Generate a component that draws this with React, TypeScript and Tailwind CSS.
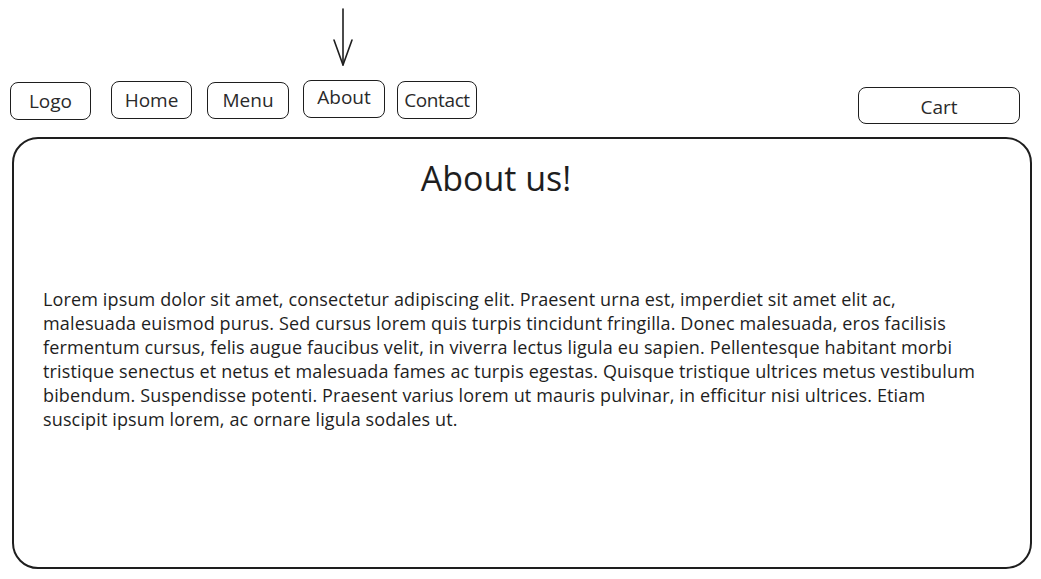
import React from "react";

const lines = [
  "Lorem ipsum dolor sit amet, consectetur adipiscing elit. Praesent urna est, imperdiet sit amet elit ac,",
  "malesuada euismod purus. Sed cursus lorem quis turpis tincidunt fringilla. Donec malesuada, eros facilisis",
  "fermentum cursus, felis augue faucibus velit, in viverra lectus ligula eu sapien. Pellentesque habitant morbi",
  "tristique senectus et netus et malesuada fames ac turpis egestas. Quisque tristique ultrices metus vestibulum",
  "bibendum. Suspendisse potenti. Praesent varius lorem ut mauris pulvinar, in efficitur nisi ultrices. Etiam",
  "suscipit ipsum lorem, ac ornare ligula sodales ut.",
];

function Btn({ label, className }: { label: string; className: string }) {
  return (
    <div
      className={`flex items-center justify-center border-[1.5px] border-[#1e1e1e] rounded-[8px] text-[19px] text-[#2a2a2a] ${className}`}
    >
      {label}
    </div>
  );
}

export default function App() {
  return (
    <div
      className="w-[1041px] h-[579px] bg-white overflow-hidden text-[#1e1e1e]"
      style={{ fontFamily: '"Open Sans", "Noto Sans", Arial, sans-serif' }}
    >
      <div className="h-[80px] pl-[332px] pt-[8px]">
        <svg width="22" height="60" viewBox="0 0 22 60" fill="none" stroke="#1e1e1e" strokeWidth="1.6" strokeLinecap="round" strokeLinejoin="round">
          <path d="M11 1 L11 57" />
          <path d="M2 32 L11 57 L20 32" />
        </svg>
      </div>
      <div className="flex items-start h-[57px]">
        <Btn label="Logo" className="ml-[10px] mt-[2px] w-[81px] h-[38px]" />
        <Btn label="Home" className="ml-[20px] mt-[1px] w-[81px] h-[38px]" />
        <Btn label="Menu" className="ml-[15px] mt-[2px] w-[82px] h-[37px]" />
        <Btn label="About" className="ml-[14px] mt-0 w-[82px] h-[38px] pb-[3px]" />
        <Btn label="Contact" className="ml-[12px] mt-[1px] w-[80px] h-[38px] tracking-[-0.4px]" />
        <Btn label="Cart" className="ml-[381px] mt-[7px] w-[162px] h-[37px] pt-[3px]" />
      </div>
      <div className="ml-[12px] w-[1020px] h-[432px] border-2 border-[#1e1e1e] rounded-[26px]">
        <h1 className="text-center text-[34px] leading-[40px] mt-[19px] pr-[52px] text-[#1e1e1e] font-normal">
          About us!
        </h1>
        <div className="mt-[89px] pl-[29px] text-[18px] leading-[24px] tracking-[0.14px] text-[#1e1e1e]">
          {lines.map((l, i) => (
            <div key={i} className="whitespace-nowrap">
              {l}
            </div>
          ))}
        </div>
      </div>
    </div>
  );
}
